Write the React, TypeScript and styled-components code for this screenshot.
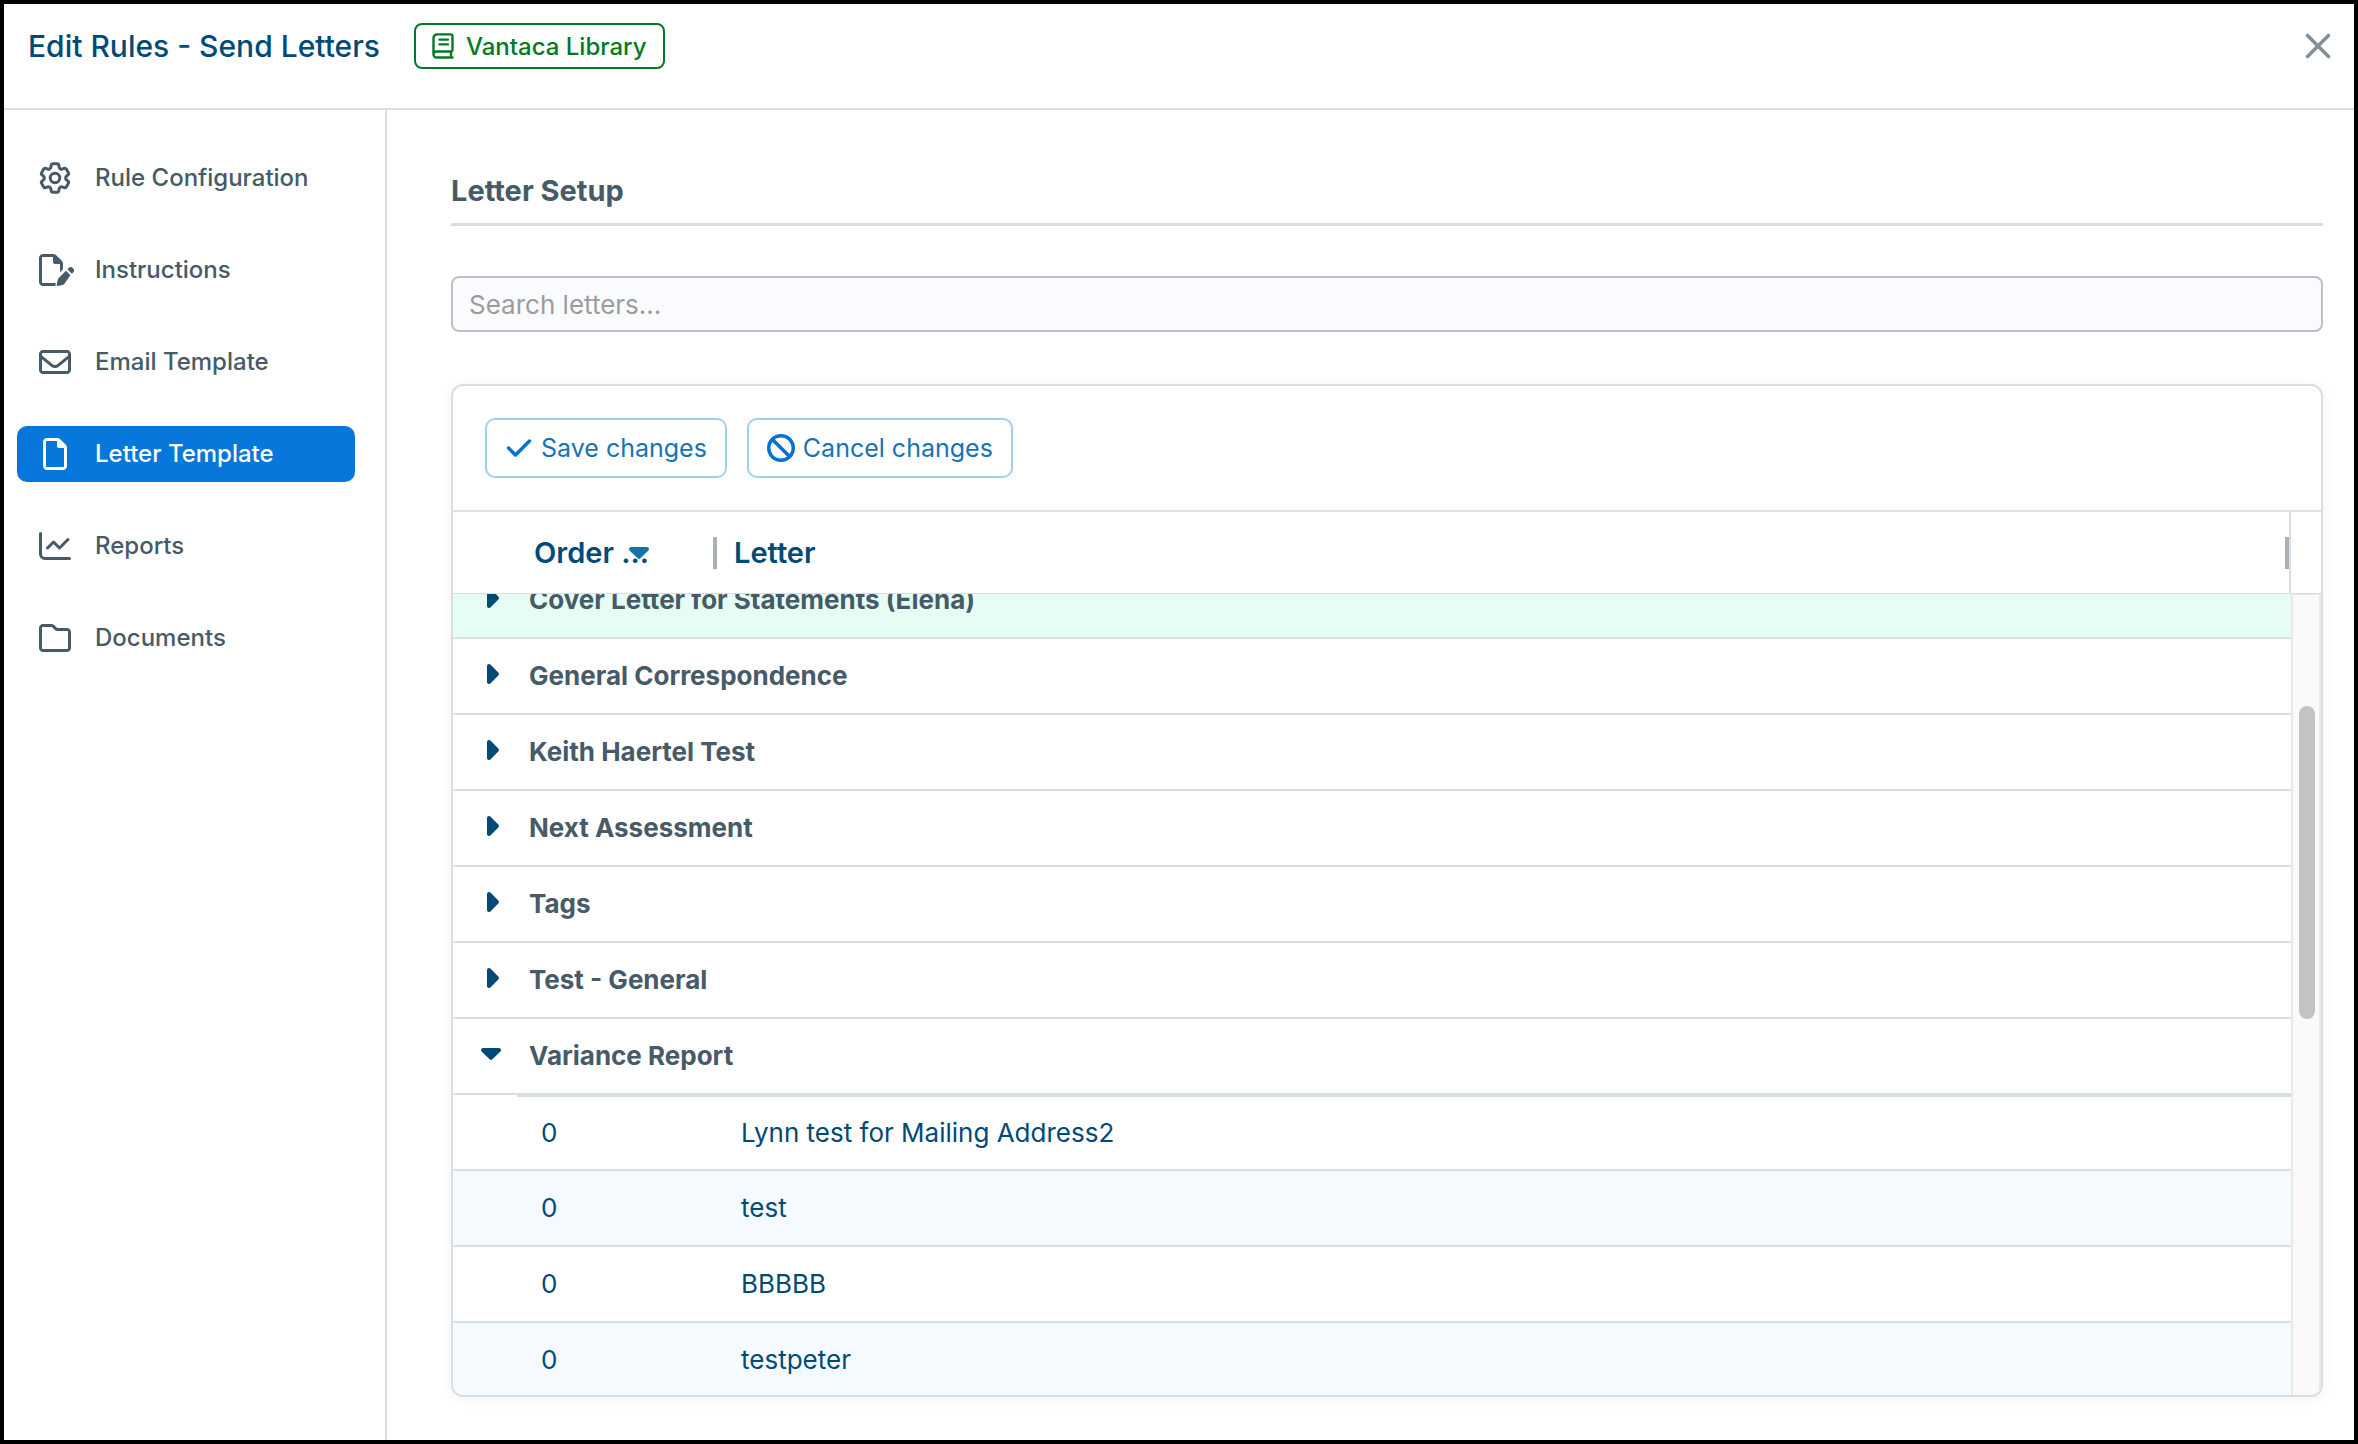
import { useLayoutEffect, useRef, useState } from "react";
import type { ReactNode } from "react";
import styled, { createGlobalStyle } from "styled-components";
import { FaBan, FaCheck, FaRegEnvelope, FaRegFile, FaRegFolder } from "react-icons/fa6";
import { HiOutlineCog6Tooth } from "react-icons/hi2";

const color = {
  navy: "#004a78",
  slate: "#465a67",
  line: "#d9dee2",
  blue: "#0877db",
  green: "#007a24",
};

const GlobalStyle = createGlobalStyle`
  *, *::before, *::after { box-sizing: border-box; }
  body { margin: 0; }
  body, button, input { font-family: Inter, "Open Sans", sans-serif; }
`;

const Dialog = styled.div`
  display: flex;
  flex-direction: column;
  height: 100vh;
  border: 4px solid #000;
  background: #fff;
`;

const Header = styled.header`
  display: flex;
  align-items: flex-start;
  gap: 34px;
  height: 106px;
  padding: 18px 22px 0 24px;
  border-bottom: 2px solid ${color.line};
`;

const Title = styled.h1`
  margin: 0;
  font-size: 30px;
  font-weight: 500;
  line-height: 48px;
  color: ${color.navy};
`;

const LibraryBadge = styled.span`
  display: flex;
  align-items: center;
  gap: 12px;
  height: 46px;
  margin-top: 1px;
  padding: 0 16px;
  border: 2px solid ${color.green};
  border-radius: 8px;
  font-size: 24px;
  font-weight: 500;
  color: ${color.green};
`;

const CloseButton = styled.button`
  display: flex;
  margin-left: auto;
  padding: 10px 0;
  border: 0;
  background: none;
  color: #848f97;
`;

const Body = styled.div`
  display: flex;
  flex: 1;
  min-height: 0;
`;

const Sidebar = styled.nav`
  display: flex;
  flex-direction: column;
  flex: none;
  gap: 36px;
  width: 383px;
  padding: 40px 30px 0 13px;
  border-right: 2px solid ${color.line};
`;

const NavLink = styled.a<{ $active: boolean }>`
  display: flex;
  align-items: center;
  gap: 24px;
  height: 56px;
  padding-left: 22px;
  border-radius: 10px;
  font-size: 24px;
  font-weight: 500;
  line-height: 28px;
  text-decoration: none;
  color: ${(p) => (p.$active ? "#fff" : color.slate)};
  background: ${(p) => (p.$active ? color.blue : "transparent")};
`;

const NavIcon = styled.span`
  display: flex;
  align-items: center;
  justify-content: center;
  width: 32px;
  height: 32px;

  svg {
    flex: none;
    overflow: visible;
  }
`;

const Main = styled.main`
  display: flex;
  flex-direction: column;
  flex: 1;
  min-width: 0;
  padding: 64px 31px 43px 64px;
`;

const SectionTitle = styled.h2`
  margin: 0 0 50px;
  padding-bottom: 15px;
  border-bottom: 3px solid ${color.line};
  font-size: 29px;
  font-weight: 700;
  line-height: 34px;
  color: ${color.slate};
`;

const SearchInput = styled.input`
  flex: none;
  height: 56px;
  margin-bottom: 52px;
  padding: 0 16px;
  border: 2px solid #bfc0c2;
  border-radius: 8px;
  background: #fafbfe;
  font-size: 26px;
  color: ${color.slate};

  &::placeholder {
    color: #9c9c9c;
    opacity: 1;
  }
`;

const Card = styled.section`
  display: flex;
  flex-direction: column;
  flex: 1;
  min-height: 0;
  overflow: hidden;
  border: 2px solid ${color.line};
  border-radius: 12px;
  background: #fff;
  box-shadow: 0 2px 16px rgba(0, 0, 0, 0.05);
`;

const Toolbar = styled.div`
  display: flex;
  gap: 20px;
  padding: 32px;
  border-bottom: 2px solid #dee1e3;
`;

const ToolbarButton = styled.button`
  display: flex;
  align-items: center;
  gap: 8px;
  height: 60px;
  padding: 0 18px;
  border: 2px solid #9fd0ef;
  border-radius: 10px;
  background: #fff;
  font-size: 25px;
  color: #1674b6;

  svg {
    color: #0072d6;
  }
`;

const GridHeader = styled.div`
  display: flex;
  height: 82px;
  border-bottom: 1px solid ${color.line};
`;

const GridTable = styled.table`
  flex: 1;
  min-width: 0;
  width: 100%;
  table-layout: fixed;
  border-collapse: separate;
  border-spacing: 0;
`;

const HeadCell = styled.th`
  padding: 0 0 0 17px;
  text-align: left;
  font-size: 29px;
  font-weight: 600;
  color: ${color.navy};
`;

const HeadContent = styled.div`
  display: flex;
  align-items: center;
`;

const SortIcon = styled.svg`
  margin-left: -20px;
`;

const Resizer = styled.span`
  width: 4px;
  height: 32px;
  margin-left: auto;
  background: #a9b0b6;
`;

const HeadCorner = styled.div`
  width: 32px;
  border-left: 2px solid ${color.line};
`;

const GridBody = styled.div`
  display: flex;
  flex: 1;
  min-height: 0;
`;

const Viewport = styled.div`
  flex: 1;
  overflow-y: auto;
  scrollbar-width: none;
`;

const Row = styled.tr<{ $tone?: string }>`
  height: 76px;
  background: ${(p) => p.$tone ?? "#fff"};
`;

const Cell = styled.td<{ $inset?: number; $rule?: boolean }>`
  padding: 0 0 0 ${(p) => p.$inset ?? 0}px;
  border-bottom: 2px solid ${color.line};
  border-top: ${(p) => (p.$rule ? `2px solid ${color.line}` : "0")};
  font-size: 26px;
  line-height: 32px;
  color: ${color.navy};
`;

const GroupCell = styled(Cell)`
  font-weight: 700;
  color: ${color.slate};
`;

const Expander = styled.button`
  display: flex;
  align-items: center;
  justify-content: center;
  width: 24px;
  height: 32px;
  margin-left: 26px;
  margin-bottom: 4px;
  padding: 0;
  border: 0;
  background: none;
`;

const ScrollTrack = styled.div`
  display: flex;
  justify-content: flex-end;
  width: 30px;
  padding: 111px 4px 0 0;
  border: solid #e8e9e9;
  border-width: 1px 2px 0;
  background: #fafafa;
`;

const ScrollThumb = styled.div`
  width: 16px;
  height: 313px;
  border-radius: 8px;
  background: #c3c3c3;
`;

function BookIcon() {
  return (
    <svg width="22" height="26" viewBox="0 0 22 26" fill="none" stroke="currentColor" strokeWidth="2.4" strokeLinecap="round">
      <path d="M20.5 24.5H4.5a3 3 0 0 1-3-3V5a3.6 3.6 0 0 1 3.6-3.6h13.4a2 2 0 0 1 2 2v13.2a1.6 1.6 0 0 1-1.6 1.9H4.5a3 3 0 0 0-3 3M19 18.6v5.6M7.5 6.6h8.4M7.5 11.4h8.4" />
    </svg>
  );
}

function FilePenIcon() {
  return (
    <svg width="32" height="32" viewBox="0 0 512 512" fill="currentColor">
      <path d="M64 464c-8.800 0-16-7.200-16-16V64c0-8.800 7.200-16 16-16h160v80c0 17.700 14.300 32 32 32h80v130.500l48-48V154.500c0-17-6.700-33.300-18.700-45.300L274.700 18.700C262.700 6.700 246.500 0 229.500 0H64C28.700 0 0 28.700 0 64v384c0 35.300 28.700 64 64 64h196l10-48z" />
      <path d="M549.800 235.700l-14.400-14.400c-15.600-15.600-40.900-15.600-56.600 0l-24 24 71 71 24-24c15.600-15.600 15.600-40.900 0-56.600zM431.800 268.300 311.500 388.700c-4.100 4.100-7 9.200-8.400 14.900l-20 82c-4 16 9 29 25 25l78-19.500c5.600-1.400 10.800-4.300 14.900-8.400L502.800 339.300z" />
    </svg>
  );
}

function ChartIcon() {
  return (
    <svg width="32" height="28" viewBox="0 0 32 28" fill="none" stroke="currentColor" strokeWidth="3" strokeLinecap="round" strokeLinejoin="round">
      <path d="M1.500 1.500v20.500a4.500 4.500 0 0 0 4.500 4.500h24.500M8.500 16l6-6 6 6 8.500-8.500" />
    </svg>
  );
}

function CloseIcon() {
  return (
    <svg width="28" height="28" viewBox="0 0 28 28" fill="none" stroke="currentColor" strokeWidth="3.600" strokeLinecap="round">
      <path d="M3.500 3.500l21 21M24.500 3.500l-21 21" />
    </svg>
  );
}

function CaretIcon({ open }: { open: boolean }) {
  return open ? (
    <svg width="20" height="12" viewBox="0 0 20 12" fill={color.navy}>
      <path d="M2 0h16c1.800 0 2.600 2.200 1.400 3.400l-8 7.900a2 2 0 0 1-2.800 0l-8-7.900C-.6 2.200.2 0 2 0z" />
    </svg>
  ) : (
    <svg width="16" height="20" viewBox="-4 0 16 20" fill={color.navy}>
      <path d="M0 2v16c0 1.800 2.200 2.600 3.400 1.400l7.900-8a2 2 0 0 0 0-2.800l-7.900-8C2.200-.6 0 .2 0 2z" />
    </svg>
  );
}

const navItems: { label: string; icon: ReactNode }[] = [
  { label: "Rule Configuration", icon: <HiOutlineCog6Tooth size={38} strokeWidth={1.9} /> },
  { label: "Instructions", icon: <FilePenIcon /> },
  { label: "Email Template", icon: <FaRegEnvelope size={32} /> },
  { label: "Letter Template", icon: <FaRegFile size={32} /> },
  { label: "Reports", icon: <ChartIcon /> },
  { label: "Documents", icon: <FaRegFolder size={32} /> },
];

const groups: { name: string; highlighted?: boolean; letters: string[] }[] = [
  { name: "Cover Letter for Statements (Elena)", highlighted: true, letters: [] },
  { name: "General Correspondence", letters: [] },
  { name: "Keith Haertel Test", letters: [] },
  { name: "Next Assessment", letters: [] },
  { name: "Tags", letters: [] },
  { name: "Test - General", letters: [] },
  { name: "Variance Report", letters: ["Lynn test for Mailing Address2", "test", "BBBBB", "testpeter"] },
];

function Columns() {
  return (
    <colgroup>
      <col style={{ width: 64 }} />
      <col style={{ width: 200 }} />
      <col />
    </colgroup>
  );
}

function LetterGroup({ name, highlighted, letters }: (typeof groups)[number]) {
  const [open, setOpen] = useState(letters.length > 0);
  return (
    <tbody>
      <Row $tone={highlighted ? "#e5fdf5" : undefined}>
        <Cell>
          <Expander aria-label={name} aria-expanded={open} onClick={() => setOpen(!open)}>
            <CaretIcon open={open} />
          </Expander>
        </Cell>
        <GroupCell colSpan={2} $inset={12}>{name}</GroupCell>
      </Row>
      {open &&
        letters.map((letter, i) => (
          <Row key={letter} $tone={i % 2 ? "#f4faff" : undefined}>
            <Cell />
            <Cell $inset={24} $rule={i === 0}>0</Cell>
            <Cell $inset={24} $rule={i === 0}>{letter}</Cell>
          </Row>
        ))}
    </tbody>
  );
}

export default function App() {
  const viewport = useRef<HTMLDivElement>(null);
  const [active, setActive] = useState("Letter Template");

  useLayoutEffect(() => {
    if (viewport.current) viewport.current.scrollTop = 31;
  }, []);

  return (
    <>
      <GlobalStyle />
      <Dialog>
        <Header>
          <Title>Edit Rules - Send Letters</Title>
          <LibraryBadge>
            <BookIcon />
            Vantaca Library
          </LibraryBadge>
          <CloseButton aria-label="Close">
            <CloseIcon />
          </CloseButton>
        </Header>
        <Body>
          <Sidebar>
            {navItems.map((item) => (
              <NavLink key={item.label} href="#" $active={item.label === active} onClick={() => setActive(item.label)}>
                <NavIcon>{item.icon}</NavIcon>
                {item.label}
              </NavLink>
            ))}
          </Sidebar>
          <Main>
            <SectionTitle>Letter Setup</SectionTitle>
            <SearchInput type="search" aria-label="Search letters" placeholder="Search letters..." />
            <Card>
              <Toolbar>
                <ToolbarButton>
                  <FaCheck size={28} />
                  Save changes
                </ToolbarButton>
                <ToolbarButton>
                  <FaBan size={28} />
                  Cancel changes
                </ToolbarButton>
              </Toolbar>
              <GridHeader>
                <GridTable>
                  <Columns />
                  <thead>
                    <tr>
                      <td />
                      <HeadCell>
                        <HeadContent>
                          Order ...
                          <SortIcon width="20" height="12" viewBox="0 0 20 12" fill="#1474a6">
                            <path d="M2 0h16c1.800 0 2.600 2.200 1.400 3.400l-8 7.900a2 2 0 0 1-2.800 0l-8-7.900C-.6 2.200.2 0 2 0z" />
                          </SortIcon>
                          <Resizer />
                        </HeadContent>
                      </HeadCell>
                      <HeadCell>
                        <HeadContent>
                          Letter
                          <Resizer />
                        </HeadContent>
                      </HeadCell>
                    </tr>
                  </thead>
                </GridTable>
                <HeadCorner />
              </GridHeader>
              <GridBody>
                <Viewport ref={viewport}>
                  <GridTable>
                    <Columns />
                    {groups.map((group) => (
                      <LetterGroup key={group.name} {...group} />
                    ))}
                  </GridTable>
                </Viewport>
                <ScrollTrack>
                  <ScrollThumb />
                </ScrollTrack>
              </GridBody>
            </Card>
          </Main>
        </Body>
      </Dialog>
    </>
  );
}
